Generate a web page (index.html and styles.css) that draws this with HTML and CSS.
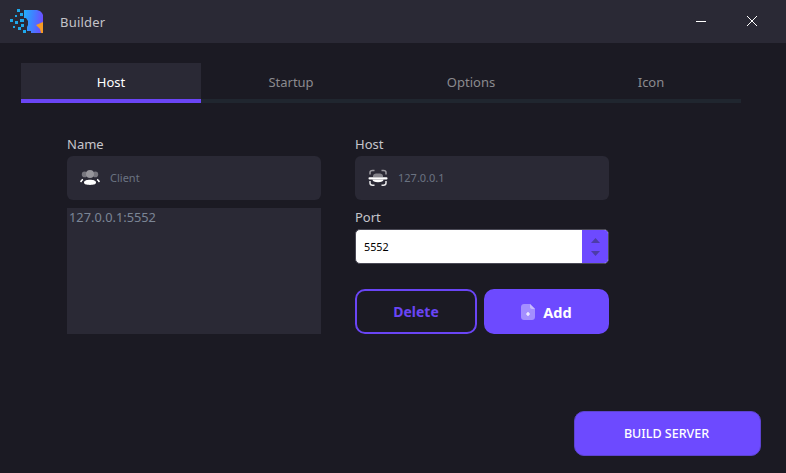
FILE: index.html
```html
<!DOCTYPE html>
<html lang="en">
<head>
<meta charset="utf-8">
<title>Builder</title>
<link rel="stylesheet" href="styles.css">
</head>
<body>
<div class="window">
  <header class="titlebar">
    <svg class="logo" width="36" height="26" viewBox="0 0 36 26">
      <defs>
        <linearGradient id="lg" x1="0" y1="0" x2="1" y2="0.15">
          <stop offset="0" stop-color="#22b0f8"/>
          <stop offset="0.5" stop-color="#3f82ff"/>
          <stop offset="1" stop-color="#6a50ff"/>
        </linearGradient>
      </defs>
      <g fill="#1fa8ea">
        <rect x="7" y="0" width="3" height="3"/>
        <rect x="10" y="4" width="3" height="3"/>
        <rect x="5" y="6" width="2" height="2"/>
        <rect x="10" y="10" width="4" height="3"/>
        <rect x="0" y="10" width="3" height="3"/>
        <rect x="5" y="12" width="3" height="3"/>
        <rect x="11" y="15" width="3" height="3"/>
        <rect x="3" y="17" width="2" height="2"/>
        <rect x="8" y="18" width="3" height="3"/>
        <rect x="13" y="21" width="3" height="3"/>
      </g>
      <path fill="url(#lg)" d="M14 1H27L30 2L32 4L33 6V24H21V22H17V18L18 16V12L16 9H14Z"/>
      <path fill="#f59a23" d="M26 16L33 13V24H31L30 20Z"/>
    </svg>
    <span class="app-title">Builder</span>
    <div class="win-controls">
      <svg width="12" height="12" viewBox="0 0 12 12"><path d="M1 6.5H11" stroke="#fff" stroke-width="1"/></svg>
      <svg width="12" height="12" viewBox="0 0 12 12"><path d="M1 1L11 11M11 1L1 11" stroke="#fff" stroke-width="1"/></svg>
    </div>
  </header>

  <main class="content">
    <nav class="tabs">
      <div class="tab active">Host</div>
      <div class="tab">Startup</div>
      <div class="tab">Options</div>
      <div class="tab">Icon</div>
    </nav>

    <section class="form">
      <div class="column">
        <label class="label">Name</label>
        <div class="field">
          <svg width="20" height="18" viewBox="0 0 20 18">
            <circle cx="4.6" cy="5.4" r="2.8" fill="#77767e"/>
            <circle cx="15.4" cy="5.4" r="2.8" fill="#77767e"/>
            <circle cx="10" cy="5" r="4" fill="#96959b"/>
            <path d="M4 13.6C4 11.6 6.8 10.8 10 10.8S16 11.6 16 13.6C16 15.4 13.5 16 10 16S4 15.4 4 13.6Z" fill="#fff"/>
            <path d="M0.8 13.2C1 11.6 1.8 10.8 3 10.4M19.2 13.2C19 11.6 18.2 10.8 17 10.4" stroke="#fff" stroke-width="1.6" fill="none"/>
          </svg>
          <span class="field-text">Client</span>
        </div>
        <div class="list">127.0.0.1:5552</div>
      </div>

      <div class="column">
        <label class="label">Host</label>
        <div class="field">
          <svg width="20" height="18" viewBox="0 0 20 18">
            <path d="M2 5.5V3.5C2 2.2 3 1.5 4.5 1.5H6.5M13.5 1.5H15.5C17 1.5 18 2.2 18 3.5V5.5" stroke="#9a999f" stroke-width="1.5" fill="none"/>
            <path d="M5 7C5 5 7 4.5 10 4.5S15 5 15 7V8H5Z" fill="#85848b"/>
            <rect x="0.5" y="8.2" width="19" height="2.4" rx="1" fill="#fff"/>
            <path d="M4.5 10.6H15.5C15.5 12.5 13.5 13.2 10 13.2S4.5 12.5 4.5 10.6Z" fill="#fff"/>
            <path d="M2 12V14C2 15.4 3 16.2 4.5 16.2H6.5M13.5 16.2H15.5C17 16.2 18 15.4 18 14V12" stroke="#e8e8ea" stroke-width="1.5" fill="none"/>
          </svg>
          <span class="field-text">127.0.0.1</span>
        </div>
        <label class="label port-label">Port</label>
        <div class="spinbox">
          <span class="spin-value">5552</span>
          <div class="spin-buttons">
            <svg width="9" height="5" viewBox="0 0 9 5"><path d="M4.5 0L9 5H0Z" fill="#4d3ca8"/></svg>
            <svg width="9" height="5" viewBox="0 0 9 5"><path d="M0 0H9L4.5 5Z" fill="#4d3ca8"/></svg>
          </div>
        </div>
        <div class="actions">
          <button class="btn btn-outline">Delete</button>
          <button class="btn btn-solid">
            <svg width="14" height="16" viewBox="0 0 14 16">
              <path d="M3 0H9L14 5V13C14 14.7 12.7 16 11 16H3C1.3 16 0 14.7 0 13V3C0 1.3 1.3 0 3 0Z" fill="#a48fff"/>
              <path d="M9 0L14 5H11C9.8 5 9 4.2 9 3Z" fill="#c9bbff"/>
              <path d="M7 8V12M5 10H9" stroke="#fff" stroke-width="1.2"/>
            </svg>
            Add
          </button>
        </div>
      </div>
    </section>

    <footer class="footer">
      <button class="btn-build">BUILD SERVER</button>
    </footer>
  </main>
</div>
</body>
</html>
```

FILE: styles.css
```css
* { box-sizing: border-box; }

html, body {
  margin: 0;
  height: 100%;
  overflow: hidden;
}

body {
  background: #1b1a23;
  font-family: "Noto Sans", "Open Sans", sans-serif;
  color: #fff;
}

.window {
  height: 473px;
  display: flex;
  flex-direction: column;
}

.titlebar {
  height: 43px;
  flex: none;
  background: #2a2935;
  display: flex;
  align-items: center;
  padding: 0 28px 0 10px;
}

.logo { flex: none; margin-top: 1px; }

.app-title {
  margin-left: 14px;
  font-size: 13px;
  color: #c4c3c8;
  letter-spacing: 0.2px;
}

.win-controls {
  margin-left: auto;
  margin-bottom: 1px;
  display: flex;
  gap: 39px;
}

.content {
  flex: 1;
  display: flex;
  flex-direction: column;
  padding: 20px 25px 17px 21px;
}

.tabs {
  display: grid;
  grid-template-columns: repeat(4, 180px);
  height: 40px;
  flex: none;
}

.tab {
  display: flex;
  align-items: center;
  justify-content: center;
  padding-top: 2px;
  font-size: 13px;
  color: #8b8a8f;
  border-bottom: 4px solid #20262f;
}

.tab.active {
  background: #2a2935;
  color: #fff;
  border-bottom-color: #6a45f5;
}

.form {
  display: grid;
  grid-template-columns: 254px 254px;
  column-gap: 34px;
  margin: 32px 0 0 46px;
}

.column {
  display: flex;
  flex-direction: column;
}

.label {
  height: 21px;
  font-size: 13px;
  line-height: 19px;
  color: #c6c5cb;
}

.field {
  height: 44px;
  background: #2a2935;
  border-radius: 6px;
  display: flex;
  align-items: center;
  padding: 0 0 1px 13px;
  gap: 10px;
}

.field-text {
  font-size: 11px;
  color: #6b7382;
}

.list {
  margin-top: 8px;
  height: 126px;
  background: #2a2935;
  padding: 0 2px;
  font-size: 12.8px;
  line-height: 18px;
  color: #7b8595;
}

.port-label {
  margin-top: 8px;
  height: 21px;
}

.spinbox {
  height: 35px;
  background: #fff;
  border: 1px solid #4a4955;
  border-radius: 5px;
  display: flex;
  align-items: center;
  overflow: hidden;
  padding-left: 8px;
}

.spin-value {
  font-size: 10.8px;
  color: #000;
}

.spin-buttons {
  margin-left: auto;
  width: 26px;
  height: 100%;
  background: #6d4aff;
  display: flex;
  flex-direction: column;
  align-items: center;
  justify-content: center;
  gap: 8px;
}

.actions {
  margin-top: 25px;
  display: grid;
  grid-template-columns: 122px 125px;
  column-gap: 7px;
}

.btn {
  height: 45px;
  border-radius: 10px;
  font-family: inherit;
  font-size: 14px;
  font-weight: 700;
  display: flex;
  align-items: center;
  justify-content: center;
  gap: 8px;
  padding: 0;
}

.btn-outline {
  background: transparent;
  border: 2px solid #6a45f5;
  color: #6a45f5;
}

.btn-solid {
  background: #6d4aff;
  border: none;
  color: #fff;
  font-size: 14.5px;
}

.footer {
  margin-top: auto;
  display: flex;
  justify-content: flex-end;
}

.btn-build {
  width: 187px;
  height: 45px;
  background: #6d4aff;
  border: 1px solid #5d43d0;
  border-radius: 10px;
  color: #fff;
  font-family: inherit;
  font-size: 12.5px;
  font-weight: 500;
  padding: 0 2px 0 0;
}
```
